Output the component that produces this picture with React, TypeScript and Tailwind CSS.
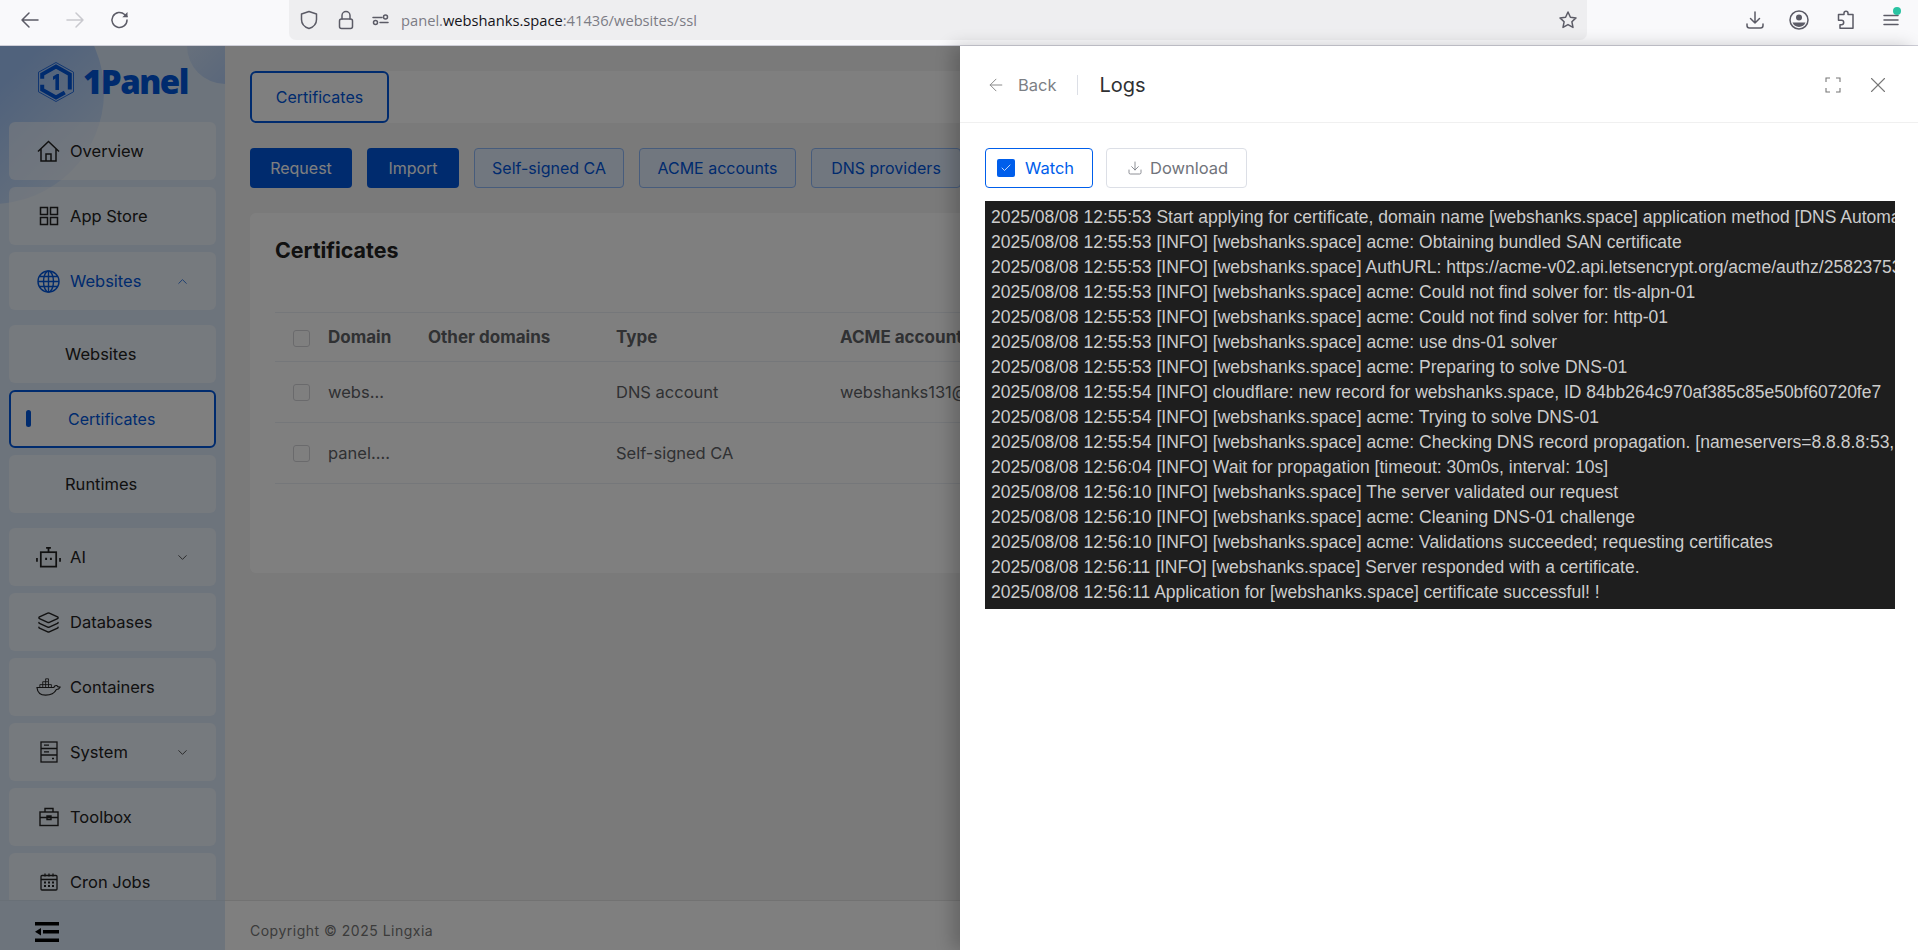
import { ArrowLeft, ChevronDown, ChevronUp, Layers, X, Download, Check } from 'lucide-react';
import type { ReactNode } from 'react';

const LOG_LINES = [
  '2025/08/08 12:55:53 Start applying for certificate, domain name [webshanks.space] application method [DNS Automatic], key algorithm [EC256]',
  '2025/08/08 12:55:53 [INFO] [webshanks.space] acme: Obtaining bundled SAN certificate',
  '2025/08/08 12:55:53 [INFO] [webshanks.space] AuthURL: https://acme-v02.api.letsencrypt.org/acme/authz/2582375347/5820718',
  '2025/08/08 12:55:53 [INFO] [webshanks.space] acme: Could not find solver for: tls-alpn-01',
  '2025/08/08 12:55:53 [INFO] [webshanks.space] acme: Could not find solver for: http-01',
  '2025/08/08 12:55:53 [INFO] [webshanks.space] acme: use dns-01 solver',
  '2025/08/08 12:55:53 [INFO] [webshanks.space] acme: Preparing to solve DNS-01',
  '2025/08/08 12:55:54 [INFO] cloudflare: new record for webshanks.space, ID 84bb264c970af385c85e50bf60720fe7',
  '2025/08/08 12:55:54 [INFO] [webshanks.space] acme: Trying to solve DNS-01',
  '2025/08/08 12:55:54 [INFO] [webshanks.space] acme: Checking DNS record propagation. [nameservers=8.8.8.8:53,1.1.1.1:53]',
  '2025/08/08 12:56:04 [INFO] Wait for propagation [timeout: 30m0s, interval: 10s]',
  '2025/08/08 12:56:10 [INFO] [webshanks.space] The server validated our request',
  '2025/08/08 12:56:10 [INFO] [webshanks.space] acme: Cleaning DNS-01 challenge',
  '2025/08/08 12:56:10 [INFO] [webshanks.space] acme: Validations succeeded; requesting certificates',
  '2025/08/08 12:56:11 [INFO] [webshanks.space] Server responded with a certificate.',
  '2025/08/08 12:56:11 Application for [webshanks.space] certificate successful! !',
];

const Tool = ({ children, className = '' }: { children: ReactNode; className?: string }) => (
  <svg viewBox="0 0 20 20" fill="none" stroke="currentColor" strokeWidth="1.5" strokeLinecap="round" strokeLinejoin="round" className={className}>
    {children}
  </svg>
);

function BrowserBar() {
  return (
    <div className="flex h-[46px] shrink-0 border-b border-[#cfcfd8] bg-[#f9f9fb] text-[#5b5b66]">
      <div className="flex h-[40px] w-[289px] shrink-0 items-center pl-[20px]">
        <Tool className="h-[20px] w-[20px]"><path d="M2 10h16M9 3l-7 7 7 7" /></Tool>
        <Tool className="ml-[25px] h-[20px] w-[20px] text-[#c9c9ce]"><path d="M18 10H2M11 3l7 7-7 7" /></Tool>
        <Tool className="ml-[25px] h-[20px] w-[20px]">
          <path d="M17 10a7.5 7.5 0 1 1-2.4-5.5L17 6.5" />
          <path d="M17.5 2v5.2h-5.2z" fill="currentColor" stroke="none" />
        </Tool>
      </div>
      <div className="flex h-[40px] w-[1298px] shrink-0 items-center rounded-b-[7px] bg-[#eeeef0] pl-[10px]">
        <Tool className="h-[20px] w-[20px]"><path d="M10 1.5l7.5 2.5v5.5c0 4.5-3.5 7.7-7.5 9-4-1.3-7.5-4.5-7.5-9V4z" /></Tool>
        <Tool className="ml-[17px] h-[20px] w-[20px]">
          <rect x="3.5" y="9" width="13" height="9.5" rx="2" />
          <path d="M6 9V5.5a4 4 0 0 1 8 0V9" />
        </Tool>
        <Tool className="ml-[15px] h-[20px] w-[20px]">
          <path d="M2 7.5h9M17 12.5h-8" />
          <circle cx="14.5" cy="7" r="2" />
          <circle cx="4.5" cy="12.5" r="2" />
        </Tool>
        <div className="ml-[10px] font-['Open_Sans',sans-serif] text-[14.7px] text-[#7c7c85]">
          panel.<span className="text-[#15141a]">webshanks.space</span>:41436/websites/ssl
        </div>
        <Tool className="ml-auto mr-[9px] h-[20px] w-[20px]"><path d="M10 2l2.4 5.2 5.6.7-4.1 3.9 1.1 5.6-5-2.8-5 2.8 1.1-5.6L2 7.9l5.6-.7z" /></Tool>
      </div>
      <div className="flex h-[40px] flex-1 items-center pl-[158px]">
        <Tool className="h-[20px] w-[20px]">
          <path d="M10 2v11M5.5 8.5L10 13l4.5-4.5M2 14v1.5A2.5 2.5 0 0 0 4.5 18h11a2.5 2.5 0 0 0 2.5-2.5V14" />
        </Tool>
        <Tool className="ml-[24px] h-[20px] w-[20px]">
          <circle cx="10" cy="10" r="9" />
          <circle cx="10" cy="7.5" r="3" fill="currentColor" stroke="none" />
          <path d="M3.5 12.5h13a7 7 0 0 1-13 0z" fill="currentColor" stroke="none" />
        </Tool>
        <Tool className="ml-[27px] h-[20px] w-[20px]">
          <path d="M8 4.5V3.2a2 2 0 0 1 4 0v1.3h5v13.7H4v-3.5h1.5a2.2 2.2 0 0 0 0-4.4H2.5V4.5z" />
        </Tool>
        <div className="relative ml-[25px]">
          <Tool className="h-[20px] w-[20px]"><path d="M3 5.5h14M3 10h14M3 14.5h14" /></Tool>
          <span className="absolute right-0 top-[-3px] h-[8px] w-[8px] rounded-full bg-[#2ac3a2]" />
        </div>
      </div>
    </div>
  );
}

function Logo() {
  return (
    <div className="relative flex h-[76px] shrink-0 items-center pb-[5px] pl-[38px]">
      <svg viewBox="0 0 36 40" className="h-[40px] w-[36px]" fill="none">
        <path d="M18 0.5L35.5 10.2V29.8L18 39.5L0.5 29.8V10.2Z" stroke="#0056dc" strokeWidth="0.8" />
        <path d="M18 4.5L31.8 12.3V27.7L18 35.5L4.2 27.7V12.3Z" stroke="#0056dc" strokeWidth="4" strokeDasharray="31 6 31 6" />
        <path d="M15 14.5l4-2.5h2v16h-3.6V16.6L15 18z" fill="#0056dc" />
      </svg>
      <span className="ml-[9px] font-['Open_Sans',sans-serif] text-[33px] font-extrabold leading-none tracking-[-1.5px] text-[#0056dc]">1Panel</span>
    </div>
  );
}

function MenuItem({ icon, label, chevron, active, selected, sub }: { icon?: ReactNode; label: string; chevron?: 'up' | 'down'; active?: boolean; selected?: boolean; sub?: boolean }) {
  if (sub) {
    return (
      <div className={selected
        ? "relative flex h-[58px] shrink-0 items-center rounded-[6px] border-2 border-[#0056dc] bg-white pl-[57px] text-[16px] text-[#0056dc]"
        : "flex h-[58px] shrink-0 items-center rounded-[6px] bg-white/50 pl-[56px] text-[16.5px] text-[#222]"}
      >
        {selected && <span className="absolute left-[15px] top-[18px] h-[17px] w-[5px] rounded-full bg-[#0056dc]" />}
        <span>{label}</span>
      </div>
    );
  }
  return (
    <div className={active
      ? "flex h-[58px] shrink-0 items-center rounded-[6px] bg-white/50 pl-[27px] pr-[26px] text-[#0056dc]"
      : "flex h-[58px] shrink-0 items-center rounded-[6px] bg-white/50 pl-[27px] pr-[26px] text-[#222]"}
    >
      <span className="flex w-[25px] shrink-0 justify-center">{icon}</span>
      <span className="ml-[9px] text-[16.5px]">{label}</span>
      {chevron === 'up' && <ChevronUp className="ml-auto h-[15px] w-[15px]" strokeWidth={1.2} />}
      {chevron === 'down' && <ChevronDown className="ml-auto h-[15px] w-[15px]" strokeWidth={1.2} />}
    </div>
  );
}

function Sidebar() {
  return (
    <aside className="relative flex w-[225px] shrink-0 flex-col overflow-hidden bg-[#dbe9f9]">
      <div className="absolute left-[-120px] top-[-66px] h-[224px] w-[224px] rounded-full bg-linear-to-br from-[#a0c4f8] from-50% to-transparent" />
      <div className="absolute right-[-38px] top-[-38px] h-[76px] w-[76px] rounded-full bg-linear-to-br from-transparent to-[#a8c6f5]" />
      <Logo />
      <div className="relative flex h-[778px] flex-col gap-[7px] overflow-hidden px-[9px]">
        <MenuItem
          icon={
            <svg viewBox="0 0 23 22" fill="none" stroke="currentColor" strokeWidth="1.5" className="h-[22px] w-[23px]">
              <path d="M1 11.5L11.5 1.5L22 11.5M4 9v12h15V9M9 21v-7h5v7" />
            </svg>
          }
          label="Overview"
        />
        <MenuItem
          icon={
            <svg viewBox="0 0 20 20" fill="none" stroke="currentColor" strokeWidth="1.5" className="h-[20px] w-[20px]">
              <rect x="1.5" y="1.5" width="7" height="7" />
              <rect x="11.5" y="1.5" width="7" height="7" />
              <rect x="1.5" y="11.5" width="7" height="7" />
              <rect x="11.5" y="11.5" width="7" height="7" />
            </svg>
          }
          label="App Store"
        />
        <MenuItem
          icon={
            <svg viewBox="0 0 23 23" fill="none" stroke="currentColor" strokeWidth="1.4" className="h-[23px] w-[23px]">
              <circle cx="11.5" cy="11.5" r="10.5" />
              <ellipse cx="11.5" cy="11.5" rx="5" ry="10.5" />
              <path d="M11.5 1v21M1 11.5h21M2.5 6.5h18M2.5 16.5h18" />
            </svg>
          }
          label="Websites"
          chevron="up"
          active
        />
        <div className="mt-[8px] flex flex-col gap-[7px]">
          <MenuItem label="Websites" sub />
          <MenuItem label="Certificates" sub selected />
          <MenuItem label="Runtimes" sub />
        </div>
        <div className="mt-[8px] flex flex-col gap-[7px]">
          <MenuItem
            icon={
              <svg viewBox="0 0 26 22" fill="none" stroke="currentColor" strokeWidth="1.8" className="h-[22px] w-[26px]">
                <rect x="5" y="6" width="16" height="15" />
                <path d="M13 1v5M10.5 1.5h5" />
                <path d="M1 12v4M25 12v4" />
                <path d="M9.5 13h2M14.5 13h2" strokeWidth="2.2" />
              </svg>
            }
            label="AI"
            chevron="down"
          />
          <MenuItem icon={<Layers className="h-[23px] w-[23px]" strokeWidth={1.5} />} label="Databases" />
          <MenuItem
            icon={
              <svg viewBox="0 0 26 18" fill="none" stroke="currentColor" strokeWidth="0.9" className="h-[18px] w-[26px]">
                <path d="M1 9.5h17.5c.6-1.6 2-2.3 3.2-2 .3 1 1.2 1.5 3.3 1.7-.8 1.7-2 2.4-3.8 2.4C19.5 15 15 17.5 10 17.5 4.5 17.5 1.5 14.5 1 9.5z" strokeWidth="1.2" />
                <path d="M4 6.5h12M4 9.5v-3M7 9.5v-6M10 9.5v-9M13 9.5v-6M16 9.5v-3M7 3.5h6M10 .5h3v3" />
              </svg>
            }
            label="Containers"
          />
          <MenuItem
            icon={
              <svg viewBox="0 0 18 22" fill="none" stroke="currentColor" strokeWidth="1.3" className="h-[22px] w-[18px]">
                <rect x="1" y="1" width="16" height="20" />
                <path d="M1 7.5h16M1 14h16M4 4.2h5M4 10.8h5M12 17.5h2" />
              </svg>
            }
            label="System"
            chevron="down"
          />
          <MenuItem
            icon={
              <svg viewBox="0 0 20 20" fill="none" stroke="currentColor" strokeWidth="1.4" className="h-[20px] w-[20px]">
                <rect x="1" y="5" width="18" height="13.5" />
                <path d="M6 5V1.5h8V5M1 10.5h18M8 9h4v3.5H8z" />
              </svg>
            }
            label="Toolbox"
          />
          <MenuItem
            icon={
              <svg viewBox="0 0 18 18" fill="none" stroke="currentColor" strokeWidth="1.3" className="h-[18px] w-[18px]">
                <rect x="1" y="2.5" width="16" height="14.5" rx="1" />
                <path d="M1 6.5h16M5 0.5v3M9 0.5v3M13 0.5v3" />
                <path d="M4 9.5h2M8 9.5h2M12 9.5h2M4 13h2M8 13h2M12 13h2" strokeWidth="1.8" />
              </svg>
            }
            label="Cron Jobs"
          />
        </div>
      </div>
      <div className="relative flex h-[50px] shrink-0 items-center border-t border-[#d3e0ef] bg-[#dbe8f8] pl-[35px] pt-[12px]">
        <svg viewBox="0 0 24 20" className="h-[20px] w-[24px]" fill="#000">
          <rect x="0" y="0" width="24" height="3.5" />
          <rect x="8" y="8" width="16" height="3.5" />
          <rect x="0" y="16.5" width="24" height="3.5" />
          <path d="M6 6v7.5L0 9.8z" />
        </svg>
      </div>
    </aside>
  );
}

function ActionButton({ label, primary, width }: { label: string; primary?: boolean; width: string }) {
  return (
    <div className={`flex h-[40px] shrink-0 items-center justify-center rounded-[4px] text-[16px] ${width} ${primary ? 'bg-[#0056dc] text-white' : 'border border-[#8fb9f8] bg-[#e3eeff] text-[#0056dc]'}`}>
      {label}
    </div>
  );
}

function CheckBox() {
  return <span className="h-[17px] w-[17px] shrink-0 rounded-[3px] border border-[#d5d5d9] bg-white" />;
}

function CertTable() {
  return (
    <div className="border-t border-[#ebeef5] text-[16.5px] text-[#606266]">
      <div className="flex h-[49px] items-center whitespace-nowrap border-b border-[#ebeef5] pt-[2px] text-[17px] font-bold">
        <div className="flex w-[153px] shrink-0 items-center pl-[18px]"><CheckBox /><span className="ml-[18px]">Domain</span></div>
        <div className="w-[188px] shrink-0">Other domains</div>
        <div className="w-[224px] shrink-0">Type</div>
        <div className="w-[120px] shrink-0 overflow-hidden">ACME account</div>
      </div>
      <div className="flex h-[61px] items-center border-b border-[#ebeef5]">
        <div className="flex w-[153px] shrink-0 items-center pl-[18px]"><CheckBox /><span className="ml-[18px]">webs…</span></div>
        <div className="w-[188px] shrink-0" />
        <div className="w-[224px] shrink-0">DNS account</div>
        <div className="w-[120px] shrink-0 overflow-hidden whitespace-nowrap">webshanks131@gmail.com</div>
      </div>
      <div className="flex h-[61px] items-center border-b border-[#ebeef5]">
        <div className="flex w-[153px] shrink-0 items-center pl-[18px]"><CheckBox /><span className="ml-[18px]">panel.…</span></div>
        <div className="w-[188px] shrink-0" />
        <div className="w-[224px] shrink-0">Self-signed CA</div>
      </div>
    </div>
  );
}

function MainArea() {
  return (
    <main className="flex min-w-0 flex-1 flex-col bg-[#f4f4f4]">
      <div className="flex-1 overflow-hidden pl-[25px] pt-[25px]">
        <div className="flex h-[52px] bg-white">
          <div className="flex w-[139px] items-center justify-center rounded-[6px] border-2 border-[#0056dc] text-[16px] text-[#0056dc]">Certificates</div>
        </div>
        <div className="mt-[25px] flex gap-[15px] whitespace-nowrap">
          <ActionButton label="Request" primary width="w-[102px]" />
          <ActionButton label="Import" primary width="w-[92px]" />
          <ActionButton label="Self-signed CA" width="w-[150px]" />
          <ActionButton label="ACME accounts" width="w-[157px]" />
          <ActionButton label="DNS providers" width="w-[150px]" />
        </div>
        <div className="mt-[25px] h-[360px] rounded-l-[6px] bg-white pl-[25px] pt-[25px]">
          <div className="text-[21.4px] font-bold leading-[25px] text-[#222]">Certificates</div>
          <div className="mt-[49px]"><CertTable /></div>
        </div>
      </div>
      <div className="flex h-[50px] shrink-0 items-center border-t border-[#e5e5e5] bg-white pl-[25px] pt-[10px] text-[14px] tracking-[0.5px] text-[#777]">
        Copyright © 2025 Lingxia
      </div>
    </main>
  );
}

function LogsDrawer() {
  return (
    <section className="absolute bottom-0 right-0 top-[46px] z-30 flex w-[958px] flex-col bg-white shadow-[-8px_0_16px_rgba(0,0,0,0.2)]">
      <header className="flex h-[77px] shrink-0 items-center border-b border-[#f0f0f0] pl-[26px] pr-[27px] pt-[2px]">
        <ArrowLeft className="h-[20px] w-[20px] text-[#8a8a8a]" strokeWidth={1.2} />
        <span className="ml-[12px] text-[16.5px] text-[#7c7f85]">Back</span>
        <span className="ml-[20px] h-[20px] w-px bg-[#dcdfe6]" />
        <span className="ml-[22px] text-[20px] text-[#303133]">Logs</span>
        <svg viewBox="0 0 16 16" fill="none" stroke="#777" strokeWidth="1.1" className="ml-auto h-[16px] w-[16px]">
          <path d="M1 5V1h4M11 1h4v4M15 11v4h-4M5 15H1v-4" />
        </svg>
        <X className="ml-[24px] h-[26px] w-[26px] text-[#777]" strokeWidth={1} />
      </header>
      <div className="flex min-h-0 flex-1 flex-col pl-[25px] pt-[25px]">
        <div className="flex gap-[13px]">
          <div className="flex h-[40px] w-[108px] items-center rounded-[4px] border border-[#005eeb] pl-[11px] text-[16.5px] text-[#005eeb]">
            <span className="flex h-[18px] w-[18px] items-center justify-center rounded-[2px] bg-[#005eeb]">
              <Check className="h-[12px] w-[12px] text-white" strokeWidth={1.5} />
            </span>
            <span className="ml-[10px]">Watch</span>
          </div>
          <div className="flex h-[40px] w-[141px] items-center rounded-[4px] border border-[#dcdfe6] pl-[20px] text-[16.5px] text-[#71747b]">
            <Download className="h-[16px] w-[16px]" strokeWidth={1.2} />
            <span className="ml-[7px]">Download</span>
          </div>
        </div>
        <div className="mt-[13px] w-[910px] overflow-hidden bg-[#1e1e1e] px-[6px] py-[4px] font-['Liberation_Sans',Arial,sans-serif] text-[17.5px] leading-[25px] text-[#cccccc]">
          {LOG_LINES.map((line, i) => (
            <div key={i} className="whitespace-nowrap">{line}</div>
          ))}
        </div>
      </div>
    </section>
  );
}

export default function App() {
  return (
    <div className="relative flex h-[950px] w-[1918px] flex-col overflow-hidden bg-white font-['Inter',sans-serif]">
      <BrowserBar />
      <div className="relative flex min-h-0 flex-1">
        <Sidebar />
        <MainArea />
        <div className="absolute inset-0 z-20 bg-black/50" />
      </div>
      <LogsDrawer />
    </div>
  );
}
